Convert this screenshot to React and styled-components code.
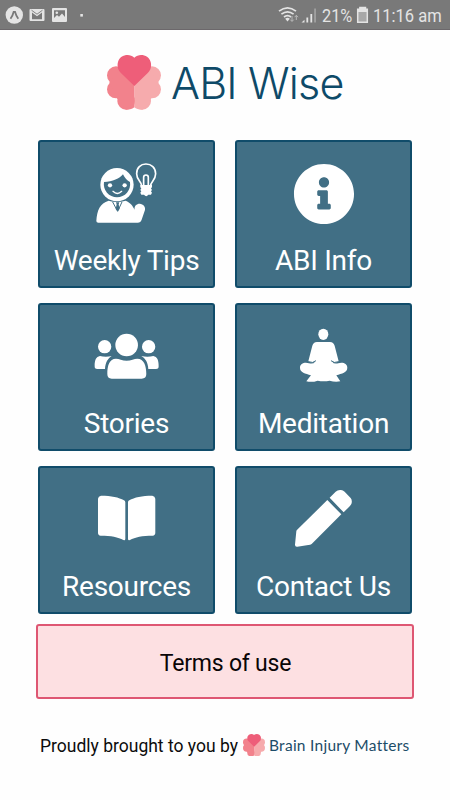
import React from 'react';
import styled, { createGlobalStyle } from 'styled-components';
import { FaInfoCircle } from 'react-icons/fa';

const GlobalStyle = createGlobalStyle`
  * {
    box-sizing: border-box;
  }
  body {
    margin: 0;
    background: #fff;
    font-family: Roboto, "Liberation Sans", sans-serif;
  }
  svg {
    display: block;
    flex: none;
  }
`;

const Screen = styled.div`
  width: 450px;
  height: 800px;
  display: flex;
  flex-direction: column;
  background: #fefefe;
  overflow: hidden;
`;

const StatusBar = styled.div`
  height: 30px;
  display: flex;
  align-items: center;
  justify-content: space-between;
  padding: 0 8px 0 5px;
  background: #797979;
  border-bottom: 1px solid #6c686b;
  color: #e4e4e4;
`;

const StatusGroup = styled.div`
  display: flex;
  align-items: center;
`;

const StatusText = styled.span`
  width: ${p => p.$width}px;
  font-size: 19px;
  line-height: 30px;
  white-space: nowrap;
  padding-top: 2px;
  transform: scaleX(${p => p.$squeeze});
  transform-origin: left;
`;

const Header = styled.header`
  height: 110px;
  padding: 25px 0 0 107px;
  display: flex;
  align-items: flex-start;
`;

const Brand = styled.h1`
  margin: 2px 0 0 10px;
  font-family: Inter, "Liberation Sans", sans-serif;
  font-weight: 300;
  font-size: 43px;
  line-height: 52px;
  letter-spacing: -0.8px;
  color: #0e4a68;
  white-space: nowrap;
`;

const Grid = styled.main`
  display: grid;
  grid-template-columns: 177px 177px;
  grid-auto-rows: 148px;
  column-gap: 20px;
  row-gap: 15px;
  padding-left: 38px;
`;

const Tile = styled.div`
  display: flex;
  flex-direction: column;
  align-items: center;
  padding-top: 18px;
  background: #416f85;
  border: 2px solid #104c6a;
  border-radius: 3px;
  color: #fff;
`;

const IconBox = styled.div`
  height: 67px;
  display: flex;
  align-items: center;
  justify-content: center;
`;

const Label = styled.span`
  margin-top: 18px;
  font-size: 28px;
  line-height: 32px;
  letter-spacing: -0.25px;
  white-space: nowrap;
`;

const Terms = styled.div`
  width: 378px;
  height: 75px;
  margin: 10px 0 0 36px;
  display: flex;
  align-items: center;
  justify-content: center;
  background: #fde0e2;
  border: 2px solid #de5773;
  border-radius: 3px;
  font-size: 23px;
  line-height: 30px;
  letter-spacing: -0.2px;
  color: #0a0506;
  padding: 4px 0 0 1px;
`;

const Footer = styled.footer`
  height: 30px;
  margin-top: 31px;
  padding-left: 40px;
  display: flex;
  align-items: center;
  white-space: nowrap;
`;

const Credit = styled.span`
  width: 203px;
  padding-top: 2px;
  font-size: 17.5px;
  line-height: 24px;
  color: #0c0c0c;
`;

const Partner = styled.span`
  margin-left: 4px;
  font-family: Lato, "Liberation Sans", sans-serif;
  font-size: 15.5px;
  line-height: 24px;
  letter-spacing: 0.27px;
  font-variant-ligatures: none;
  color: #1c4c68;
`;

function Logo({ width }) {
  return (
    <svg width={width} height={width * 164 / 162} viewBox="35 30 162 164">
      <g fill="#f6abad">
        <circle cx="170" cy="91" r="27" />
        <circle cx="170" cy="133" r="27" />
        <circle cx="141" cy="168" r="26" />
        <path d="M117 72H160L190 112 168 160 141 194Q124 194 117 187Z" />
      </g>
      <g fill="#f2828c">
        <circle cx="62" cy="91" r="27" />
        <circle cx="62" cy="133" r="27" />
        <circle cx="92" cy="168" r="26" />
        <path d="M117 72H75L42 112 65 160 92 194Q110 194 117 187Z" />
      </g>
      <path
        fill="#ee5e79"
        d="M117 123L76 83C67 75 65 62 68 51C73 31 101 23 117 38C133 23 161 31 166 51C169 62 167 75 158 83Z"
      />
    </svg>
  );
}

function TipsIcon() {
  return (
    <svg width="73.3" height="66.7" viewBox="179 75 220 200" fill="#fff">
      <circle cx="260" cy="149" r="50" />
      <path fill="#416f85" d="M221 141C247 140 268 131 278 118C283 129 291 137 299 141A39.5 39.5 0 1 1 221 141Z" />
      <circle cx="239" cy="151" r="6.5" />
      <circle cx="283" cy="151" r="6.5" />
      <path d="M248 169Q261 182 274 169" fill="none" stroke="#fff" strokeWidth="4" strokeLinecap="round" />
      <path d="M198 258C200 225 209 205 235 197Q260 205 286 197C300 202 308 214 313 224C311 213 319 206 328 206C339 207 346 215 344 225L334 254Q331 263 322 263H204Q198 263 198 258Z" />
      <path d="M247 201L262 229 275 201" fill="none" stroke="#416f85" strokeWidth="3" />
      <path fill="#416f85" d="M257 202H267L265 208 268 222 262 229 256 222 259 208Z" />
      <path
        d="M334 152C334 140 319 136 319 116C319 98 331 87 347 87C363 87 376 98 376 116C376 135 361 140 361 152"
        fill="none"
        stroke="#fff"
        strokeWidth="5"
      />
      <path d="M340 153V127Q340 120 347 120Q354 120 354 127V153" fill="none" stroke="#fff" strokeWidth="5" />
      <path d="M330 150H365V157L362 160 365 165 362 169 365 173 362 179H354Q348 188 341 179H333L330 173 333 169 330 165 333 160 330 157Z" />
    </svg>
  );
}

function StoriesIcon() {
  return (
    <svg width="73.3" height="66.7" viewBox="179 75 220 200" fill="#fff">
      <circle cx="289" cy="141" r="34" />
      <circle cx="223" cy="146" r="20" />
      <circle cx="355" cy="146" r="20" />
      <path d="M209 174C218 176 231 177 244 174C233 181 225 193 224 213H201Q192 213 193 204C193 187 197 176 209 174Z" />
      <path d="M369 174C360 176 347 177 333 174C345 181 353 193 354 213H377Q386 213 385 204C385 187 381 176 369 174Z" />
      <path d="M257 182C266 182 276 188 289 188C302 188 312 182 321 182C341 182 348 203 348 228Q348 242 334 242H244Q231 242 231 228C231 203 237 182 257 182Z" />
    </svg>
  );
}

function MeditationIcon() {
  return (
    <svg width="73.3" height="66.7" viewBox="170 75 220 200" fill="#fff">
      <ellipse cx="279" cy="109" rx="15" ry="17" />
      <path d="M246 143Q249 133 260 132H299Q310 133 313 143L325 190Q319 196 306 191Q310 199 324 196C337 191 351 197 351 209C351 224 335 226 318 232L330 250Q314 253 298 248Q280 252 262 248Q245 254 228 250L242 232C225 226 209 224 209 209C209 197 223 191 236 196Q250 199 254 191Q241 196 234 190Z" />
      <path d="M234 191Q248 197 257 188M325 191Q311 197 302 188" fill="none" stroke="#416f85" strokeWidth="3" />
    </svg>
  );
}

function BookIcon() {
  return (
    <svg width="73.3" height="66.7" viewBox="179 78 220 200" fill="#fff">
      <path d="M212 107C243 107 266 112 281 121Q285 123 285 127V236Q285 242 279 240C264 231 242 227 211 227Q203 226 203 218V116Q204 108 212 107Z" />
      <path d="M366 107C335 107 312 112 297 121Q293 123 293 127V236Q293 242 299 240C314 231 336 227 367 227Q375 226 375 218V116Q374 108 366 107Z" />
    </svg>
  );
}

function PencilIcon() {
  return (
    <svg width="73.3" height="66.7" viewBox="170 78 220 200" fill="#fff">
      <path d="M291 120L333 163 244 252Q240 255 234 255L201 260Q194 261 194 254L198 214Q198 211 202 208Z" />
      <path d="M298 113L316 95Q322 89 332 90 338 90 343 95L361 114Q366 120 364 130 363 134 359 138L340 157Z" />
    </svg>
  );
}

const tiles = [
  { label: 'Weekly Tips', icon: <TipsIcon /> },
  { label: 'ABI Info', icon: <FaInfoCircle size={62} /> },
  { label: 'Stories', icon: <StoriesIcon /> },
  { label: 'Meditation', icon: <MeditationIcon /> },
  { label: 'Resources', icon: <BookIcon /> },
  { label: 'Contact Us', icon: <PencilIcon /> },
];

function NotificationIcons() {
  return (
    <svg width="90" height="24" viewBox="5 3 90 24" fill="#e4e4e4">
      <circle cx="14.3" cy="15" r="8.7" />
      <path d="M10.5 18.7Q12.7 16 13.7 11.8H15Q16.1 16 18.3 18.7" fill="none" stroke="#797979" strokeWidth="1.8" />
      <path fillRule="evenodd" d="M30.5 9H43.5Q44.5 9 44.5 10V20Q44.5 21 43.5 21H30.5Q29.5 21 29.5 20V10Q29.5 9 30.5 9ZM32 12.5V19.2H42V12.5L37 16.2Z" />
      <path d="M31.5 10.2L37 14.2 42.5 10.2" fill="none" stroke="#797979" strokeWidth="0.9" />
      <path fillRule="evenodd" d="M53 8H66Q67 8 67 9V21Q67 22 66 22H53Q52 22 52 21V9Q52 8 53 8ZM54 10.3V18L57 15 59 16.8 62 13.4 65 17V10.3Z" />
      <circle cx="56.8" cy="12.8" r="1.3" />
      <rect x="80.3" y="14" width="2.6" height="2.6" />
    </svg>
  );
}

function SignalIcons() {
  return (
    <svg width="45" height="24" viewBox="277 3 45 24">
      <g fill="none" stroke="#e4e4e4" strokeWidth="1.7">
        <path d="M279 11.2Q287.5 4.5 296 11.2" />
        <path d="M281.4 14.2Q287.5 9.4 293.6 14.2" />
        <path d="M284 17Q287.5 14.2 291 17" />
      </g>
      <path d="M285.2 18.7Q287.5 17 289.8 18.7L287.5 21.4Z" fill="#e4e4e4" />
      <path d="M292 16V21M290.3 19.6L292 21.5 293.7 19.6M296.3 20V15.5M294.6 17.2L296.3 15.3 298 17.2" fill="none" stroke="#b9b9b9" />
      <g fill="#e4e4e4">
        <path d="M301.5 22.5L304.5 19.8V22.5Z" />
        <rect x="306.4" y="17.5" width="1.8" height="5" />
        <rect x="310.4" y="14" width="1.8" height="8.5" />
      </g>
      <rect x="314.3" y="8.5" width="1.5" height="14" fill="#a8a8a8" />
    </svg>
  );
}

function BatteryIcon() {
  return (
    <svg width="20" height="24" viewBox="353 3 20 24">
      <path d="M360 7.5H365.5V9.3H367.3V22.3H357.7V9.3H360Z" fill="#a8a8a8" stroke="#e4e4e4" strokeWidth="1.5" />
      <path d="M359.5 7H366V9H368V12H357.3V9H359.5Z" fill="#e4e4e4" />
    </svg>
  );
}

function App() {
  return (
    <>
      <GlobalStyle />
      <Screen>
        <StatusBar>
          <NotificationIcons />
          <StatusGroup>
            <SignalIcons />
            <StatusText $width={31} $squeeze={0.86}>21%</StatusText>
            <BatteryIcon />
            <StatusText $width={69} $squeeze={0.87}>11:16 am</StatusText>
          </StatusGroup>
        </StatusBar>
        <Header>
          <Logo width={54} />
          <Brand>ABI Wise</Brand>
        </Header>
        <Grid>
          {tiles.map(tile => (
            <Tile key={tile.label}>
              <IconBox>{tile.icon}</IconBox>
              <Label>{tile.label}</Label>
            </Tile>
          ))}
        </Grid>
        <Terms>Terms of use</Terms>
        <Footer>
          <Credit>Proudly brought to you by</Credit>
          <Logo width={22} />
          <Partner>Brain Injury Matters</Partner>
        </Footer>
      </Screen>
    </>
  );
}

export default App;
